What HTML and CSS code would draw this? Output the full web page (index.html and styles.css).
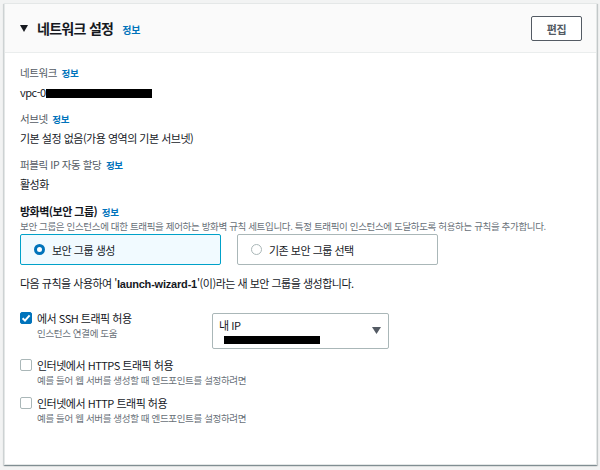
FILE: index.html
```html
<!DOCTYPE html>
<html lang="ko">
<head>
<meta charset="utf-8">
<link rel="stylesheet" href="styles.css">
</head>
<body>
<div class="panel">
  <div class="panel-header">
    <div class="title-wrap">
      <span class="caret"></span>
      <h2 class="title">네트워크 설정</h2>
      <a class="info">정보</a>
    </div>
    <button class="btn">편집</button>
  </div>
  <div class="panel-body">
    <div class="field">
      <div class="label">네트워크 <a class="info">정보</a></div>
      <div class="value">vpc-0<span class="redact redact-vpc"></span></div>
    </div>
    <div class="field">
      <div class="label">서브넷 <a class="info">정보</a></div>
      <div class="value">기본 설정 없음(가용 영역의 기본 서브넷)</div>
    </div>
    <div class="field">
      <div class="label">퍼블릭 IP 자동 할당 <a class="info">정보</a></div>
      <div class="value">활성화</div>
    </div>
    <div class="field fw">
      <div class="fw-title">방화벽(보안 그룹) <a class="info">정보</a></div>
      <div class="desc">보안 그룹은 인스턴스에 대한 트래픽을 제어하는 방화벽 규칙 세트입니다. 특정 트래픽이 인스턴스에 도달하도록 허용하는 규칙을 추가합니다.</div>
      <div class="tiles">
        <div class="tile selected"><span class="radio on"></span>보안 그룹 생성</div>
        <div class="tile"><span class="radio"></span>기존 보안 그룹 선택</div>
      </div>
    </div>
    <div class="note">다음 규칙을 사용하여 '<b class="mono">launch-wizard-1</b>'(이)라는 새 보안 그룹을 생성합니다.</div>

    <div class="rules">
      <div class="rule">
        <div class="check-row">
          <span class="checkbox checked">
            <svg viewBox="0 0 12 12" width="12" height="12"><path d="M2.6 6.2 L5 8.6 L9.6 3.4" fill="none" stroke="#fff" stroke-width="2"/></svg>
          </span>
          <div class="check-text">
            <div class="check-title">에서 SSH 트래픽 허용</div>
            <div class="check-desc">인스턴스 연결에 도움</div>
          </div>
        </div>
        <div class="select">
          <div class="select-text">
            <div class="select-label">내 IP</div>
            <span class="redact redact-ip"></span>
          </div>
          <svg class="select-caret" viewBox="0 0 9 7" width="9" height="7"><path d="M0 0 H9 L4.5 7 Z" fill="#545b64"/></svg>
        </div>
      </div>
      <div class="rule">
        <div class="check-row">
          <span class="checkbox"></span>
          <div class="check-text">
            <div class="check-title">인터넷에서 HTTPS 트래픽 허용</div>
            <div class="check-desc">예를 들어 웹 서버를 생성할 때 엔드포인트를 설정하려면</div>
          </div>
        </div>
      </div>
      <div class="rule">
        <div class="check-row">
          <span class="checkbox"></span>
          <div class="check-text">
            <div class="check-title">인터넷에서 HTTP 트래픽 허용</div>
            <div class="check-desc">예를 들어 웹 서버를 생성할 때 엔드포인트를 설정하려면</div>
          </div>
        </div>
      </div>
    </div>
  </div>
</div>
</body>
</html>
```
FILE: styles.css
```css
* { box-sizing: border-box; }
html, body { height: 100%; }
body {
  margin: 0;
  padding: 3px 3px 0 4px;
  background: #f2f3f3;
  font-family: "Noto Sans CJK KR", "Noto Sans", sans-serif;
  font-size: 11px;
  letter-spacing: -0.5px;
  color: #16191f;
}
.panel {
  height: 462px;
  background: #fff;
  border: 1px solid #e4e7e7;
  box-shadow: 0 1px 1px 0 rgba(0,28,36,.3), 1px 1px 1px 0 rgba(0,28,36,.15), -1px 1px 1px 0 rgba(0,28,36,.1);
}
.panel-header {
  height: 49px;
  background: #fafafa;
  border-bottom: 1px solid #eaeded;
  display: flex;
  align-items: center;
  justify-content: space-between;
  padding: 0 14px 0 15px;
}
.title-wrap { display: flex; align-items: center; }
.caret {
  width: 0; height: 0;
  border-left: 4px solid transparent;
  border-right: 4px solid transparent;
  border-top: 7px solid #16191f;
  margin-right: 9px;
  margin-top: 1px;
}
.title {
  margin: 0;
  font-size: 14px;
  letter-spacing: -0.7px;
  font-weight: 700;
  line-height: 20px;
  margin-right: 9px;
}
.info {
  color: #0073bb;
  font-weight: 700;
  font-size: 9.5px;
  letter-spacing: -0.3px;
  margin-left: 2px;
}
.title-wrap .info { margin-left: 0; font-size: 10px; margin-top: 2px; }
.btn {
  font-family: inherit;
  font-size: 11px;
  font-weight: 700;
  letter-spacing: -0.3px;
  color: #545b64;
  background: #fff;
  border: 1px solid #545b64;
  border-radius: 2px;
  width: 51px;
  height: 25px;
  padding: 0;
  margin-top: 1px;
}
.panel-body { padding: 11px 15px 0 15px; }
.field { margin-bottom: 9px; }
.label { color: #545b64; line-height: 18px; font-size: 10.5px; letter-spacing: -0.4px; }
.value { line-height: 18px; margin-top: 1px; }
.redact {
  display: inline-block;
  background: #000;
  vertical-align: middle;
}
.redact-vpc { width: 106px; height: 9px; margin-left: 0; margin-top: -2px; }
.fw { margin-bottom: 0; }
.fw-title { font-weight: 700; line-height: 18px; font-size: 11px; }
.desc { color: #687078; font-size: 9.5px; line-height: 12px; margin-top: -1px; white-space: nowrap; letter-spacing: -0.35px; }
.tiles { display: flex; gap: 16px; margin-top: 2px; }
.tile {
  width: 201px;
  height: 31px;
  border: 1px solid #aab7b8;
  border-radius: 2px;
  display: flex;
  align-items: center;
  padding-left: 13px;
  font-size: 11px;
}
.tile.selected { border-color: #00a1c9; background: #f1faff; }
.radio {
  width: 11px; height: 11px;
  border-radius: 50%;
  border: 1px solid #aab7b8;
  margin-right: 7px;
  background: #fff;
}
.radio.on { border: 3.5px solid #0073bb; }
.note { margin-top: 9px; line-height: 18px; }
.mono { font-weight: 700; font-family: "Liberation Sans", "Noto Sans CJK KR", sans-serif; letter-spacing: -0.2px; }
.rules { margin-top: 16px; }
.rule { display: flex; align-items: flex-start; margin-bottom: 7px; }
.rule:first-child { margin-bottom: 7px; }
.check-row { display: flex; align-items: flex-start; width: 192px; }
.checkbox {
  width: 12px; height: 12px;
  border: 1px solid #aab7b8;
  border-radius: 2px;
  margin-top: 3px;
  margin-right: 5px;
  flex: none;
  display: flex;
}
.checkbox.checked { background: #0073bb; border-color: #0073bb; }
.checkbox.checked svg { margin: -1px; }
.check-text { white-space: nowrap; }
.check-title { line-height: 18px; font-size: 11px; }
.check-desc { color: #687078; font-size: 9.5px; letter-spacing: -0.35px; line-height: 13px; }
.select {
  margin-top: 4px;
  width: 177px;
  height: 36px;
  border: 1px solid #aab7b8;
  border-radius: 2px;
  display: flex;
  align-items: center;
  justify-content: space-between;
  padding: 0 7px 0 6px;
}
.select-label { line-height: 16px; font-size: 11px; margin-top: -2px; }
.redact-ip { display: block; width: 96px; height: 8px; margin-top: 3px; margin-left: 5px; }
.select-caret { margin-top: -2px; }
```
